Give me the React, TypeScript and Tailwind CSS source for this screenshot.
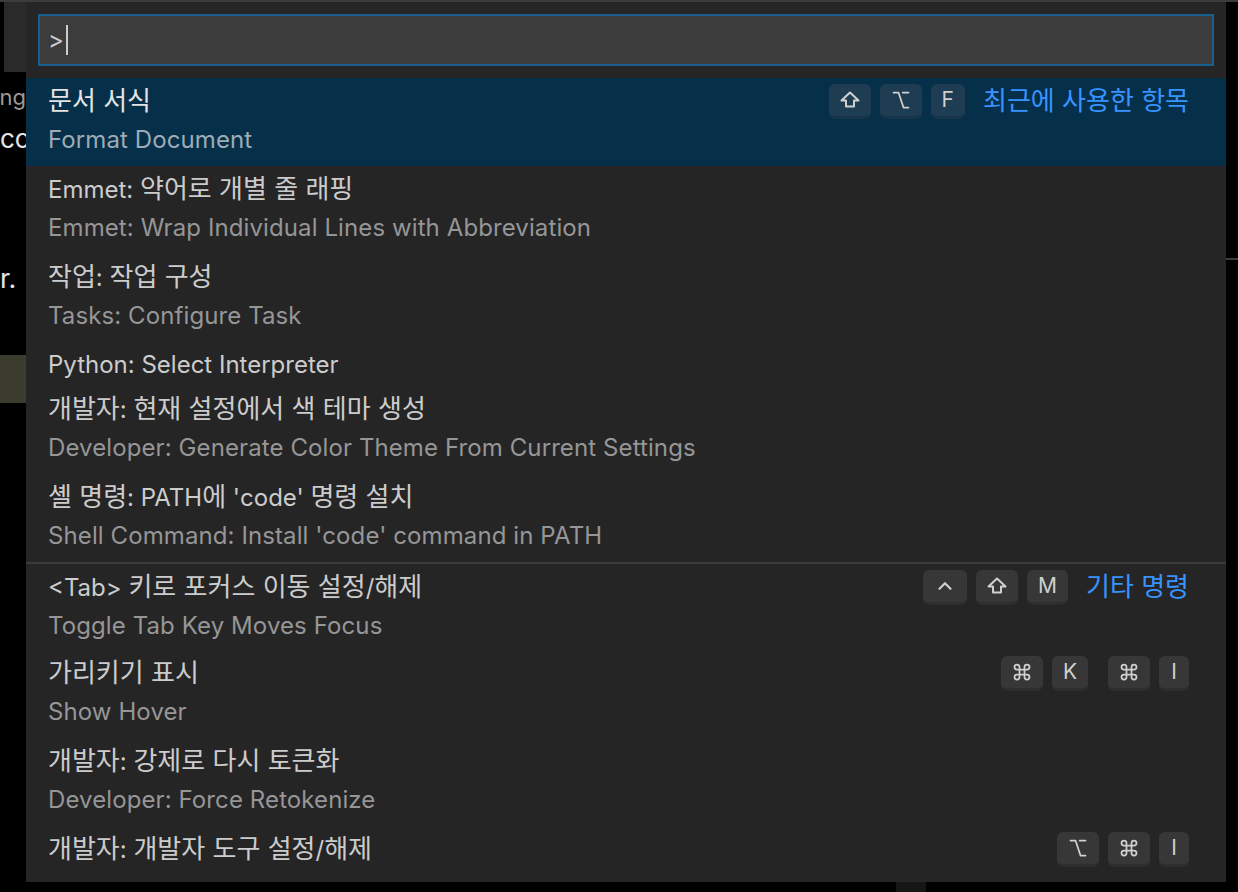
import { ChevronUp, Command, Option } from 'lucide-react';
import type { ReactNode } from 'react';

type Item = {
  label: string;
  detail?: string;
  keys?: string[][];
  description?: string;
  selected?: boolean;
  separator?: boolean;
};

const items: Item[] = [
  {
    label: '문서 서식',
    detail: 'Format Document',
    keys: [['shift', 'alt', 'F']],
    description: '최근에 사용한 항목',
    selected: true,
  },
  { label: 'Emmet: 약어로 개별 줄 래핑', detail: 'Emmet: Wrap Individual Lines with Abbreviation' },
  { label: '작업: 작업 구성', detail: 'Tasks: Configure Task' },
  { label: 'Python: Select Interpreter' },
  { label: '개발자: 현재 설정에서 색 테마 생성', detail: 'Developer: Generate Color Theme From Current Settings' },
  { label: "셸 명령: PATH에 'code' 명령 설치", detail: "Shell Command: Install 'code' command in PATH" },
  {
    label: '<Tab> 키로 포커스 이동 설정/해제',
    detail: 'Toggle Tab Key Moves Focus',
    keys: [['ctrl', 'shift', 'M']],
    description: '기타 명령',
    separator: true,
  },
  { label: '가리키기 표시', detail: 'Show Hover', keys: [['cmd', 'K'], ['cmd', 'I']] },
  { label: '개발자: 강제로 다시 토큰화', detail: 'Developer: Force Retokenize' },
  { label: '개발자: 개발자 도구 설정/해제', keys: [['alt', 'cmd', 'I']] },
];

// Hangul in Noto CJK draws smaller than the mac system font, so bump it a little
function Ko({ text }: { text: string }) {
  const parts = text.split(/([\uAC00-\uD7A3\u3131-\u318E]+(?: [\uAC00-\uD7A3\u3131-\u318E]+)*)/);
  return (
    <>
      {parts.map((p, i) =>
        i % 2 === 1 ? (
          <span key={i} className="text-[26px]">
            {p}
          </span>
        ) : (
          <span key={i}>{p}</span>
        )
      )}
    </>
  );
}

function ShiftIcon() {
  return (
    <svg width="20" height="17" viewBox="0 0 20 17" fill="none" stroke="currentColor" strokeWidth="2" strokeLinejoin="round">
      <path d="M10 1.5 L18.5 9.5 H14 V15.5 H6 V9.5 H1.5 Z" />
    </svg>
  );
}

function Glyph({ k }: { k: string }) {
  if (k === 'shift') return <ShiftIcon />;
  if (k === 'alt') return <Option size={20} strokeWidth={2.1} />;
  if (k === 'cmd') return <Command size={20} strokeWidth={2.1} />;
  if (k === 'ctrl') return <ChevronUp size={22} strokeWidth={2.4} />;
  return <span className="text-[21px] leading-none">{k}</span>;
}

function Kbd({ k, selected }: { k: string; selected?: boolean }) {
  return (
    <span
      className={
        'inline-flex items-center justify-center h-[35px] px-[11px] min-w-[30px] rounded-[6px] border-b-[3px] text-[#d0d0d0] ' +
        (selected ? 'bg-[#1e3c52] border-[#17344a]' : 'bg-[#373737] border-[#2e2e2e]')
      }
    >
      <Glyph k={k} />
    </span>
  );
}

function Row({ item }: { item: Item }) {
  let keys: ReactNode = null;
  if (item.keys) {
    keys = (
      <div className="flex items-center gap-[20px]">
        {item.keys.map((chord, i) => (
          <div key={i} className="flex items-center gap-[9px]">
            {chord.map((k, j) => (
              <Kbd key={j} k={k} selected={item.selected} />
            ))}
          </div>
        ))}
      </div>
    );
  }

  return (
    <div
      className={
        'pl-[22px] pr-[37px] ' +
        (item.selected ? 'bg-[#062f4a] ' : '') +
        (item.separator ? 'border-t-2 border-[#3b3b3b] ' : '') +
        (item.detail ? 'h-[88px]' : 'h-[44px]')
      }
    >
      <div className="flex items-center h-[44px] pt-[2px]">
        <span className={'flex-1 leading-[42px] ' + (item.selected ? 'text-[#e4e4e4]' : 'text-[#cccccc]')}>
          <Ko text={item.label} />
        </span>
        {keys}
        {item.description && (
          <span className="ml-[18px] text-[#3794ff] leading-[42px]">
            <Ko text={item.description} />
          </span>
        )}
      </div>
      {item.detail && (
        <div
          className={
            'leading-[35px] tracking-[0.1px] ' + (item.selected ? 'text-[#9eabb5]' : 'text-[#969696]')
          }
        >
          {item.detail}
        </div>
      )}
    </div>
  );
}

export default function App() {
  return (
    <div
      className="relative w-[1238px] h-[892px] bg-black overflow-hidden text-[24px]"
      style={{ fontFamily: 'Inter, "Noto Sans CJK KR", sans-serif' }}
    >
      {/* editor behind the picker */}
      <div className="h-[2px] bg-[#3c3c3c]" />
      <div className="flex h-[890px]">
        <div className="w-[26px] flex flex-col">
          <div className="ml-[4px] h-[70px] bg-[#2a2a2a]" />
          <div className="h-[36px] flex items-end justify-end text-[22px] text-[#9a9a9a] leading-none">
            ng
          </div>
          <div className="h-[44px] flex items-end justify-start text-[26px] text-[#e6e6e6] leading-none">
            co
          </div>
          <div className="h-[140px] flex items-end justify-start text-[27px] text-[#e6e6e6] leading-none">
            r.
          </div>
          <div className="mt-[63px] h-[48px] bg-[#3b3b2f]" />
        </div>
        <div className="w-[1200px]" />
        <div className="w-[12px] flex flex-col">
          <div className="h-[256px]" />
          <div className="h-[2px] bg-[#3c3c3c]" />
        </div>
      </div>

      {/* quick pick */}
      <div className="absolute left-[26px] top-[2px] w-[1200px] h-[880px] bg-[#252526] overflow-hidden">
        <div className="px-[12px] pt-[12px] pb-[12px]">
          <div className="h-[52px] bg-[#3c3c3c] border-2 border-[#1a5e8e] flex items-center pl-[8px] text-[#cccccc]">
            <span>&gt;</span>
            <span className="ml-[2px] w-[2px] h-[30px] bg-[#cccccc]" />
          </div>
        </div>
        <div>
          {items.map((item, i) => (
            <Row key={i} item={item} />
          ))}
        </div>
      </div>
      <div className="absolute left-[896px] top-[882px] w-[30px] h-[10px] bg-[#161616]" />
    </div>
  );
}
